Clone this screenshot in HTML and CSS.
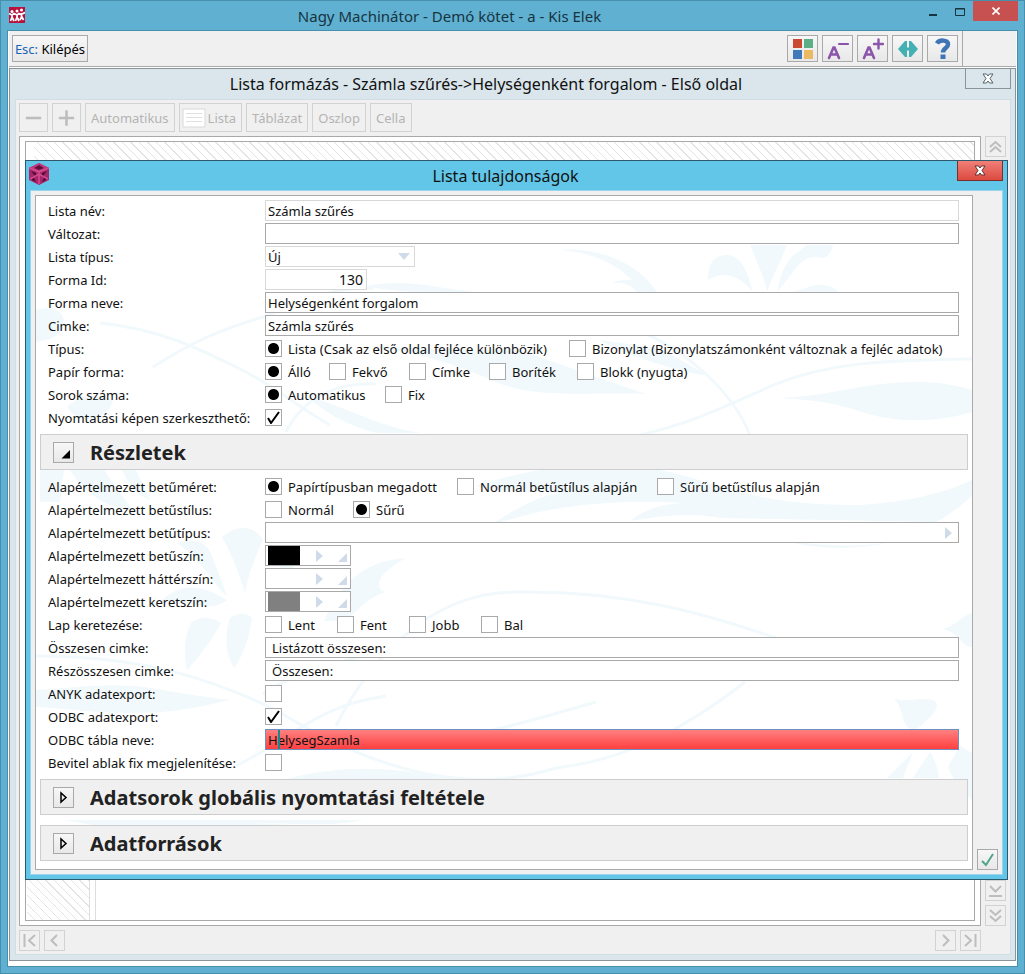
FILE: index.html
```
<!DOCTYPE html>
<html lang="hu">
<head>
  <meta charset="UTF-8" />
  <title>Nagy Machinátor</title>
  <link rel="stylesheet" href="styles.css">
</head>
<body>
  <div class="app-window">
    <header class="app-title">
      <svg class="app-logo" viewBox="0 0 16 16" width="16" height="16">
        <rect width="16" height="16" fill="#b8123c" />
        <path d="M0 6.500l3 1.500 2-1.500 3 1.500 2-1.500 2 1 4-2M3 7v3l-1.500 4M3 10l2 4M8 7v3l-1.500 4M8 10l2 4M12.500 6v4l-1.500 3M12.500 9l2 4" fill="none" stroke="#fff" stroke-width="1.700" />
        <circle cx="3" cy="4.500" r="1.500" fill="#fff" /><circle cx="8" cy="4" r="1.500" fill="#fff" /><circle cx="12.500" cy="3" r="1.500" fill="#fff" />
      </svg>
      <h1>Nagy Machinátor - Demó kötet - a - Kis Elek</h1>
      <div class="window-buttons">
        <button type="button" aria-label="Kis méret"><svg width="10" height="16" viewBox="0 0 10 16"><path d="M1 12h8" stroke="#17343f" stroke-width="2" /></svg></button>
        <button type="button" aria-label="Teljes méret"><svg width="10" height="16" viewBox="0 0 10 16"><path d="M.5 5.500v7h9v-7zM0 6h10" fill="none" stroke="#17343f" /></svg></button>
        <button type="button" class="close" aria-label="Bezárás"><svg width="8" height="8" viewBox="0 0 8 8"><path d="M.5.500l7 7M7.500.500l-7 7" stroke="#fff" stroke-width="1.600" /></svg></button>
      </div>
    </header>

    <div class="app-client">
      <div class="toolbar">
        <button type="button" class="esc-btn"><span>Esc:</span> Kilépés</button>
        <div class="tools">
          <button type="button" aria-label="Színek"><svg width="22" height="22" viewBox="0 0 22 22"><path fill="#cb4b32" d="M1 1h9v9H1z" /><path fill="#5aae88" d="M12 1h9v9h-9z" /><path fill="#3f79b8" d="M1 12h9v9H1z" /><path fill="#eab962" d="M12 12h9v9h-9z" /></svg></button>
          <button type="button" aria-label="Kisebb betű"><svg width="22" height="22" viewBox="0 0 22 22" fill="none" stroke="#8b55ab" stroke-width="2.600" stroke-linecap="round"><path d="M2 20L6.500 9.500h1L12 20M4.500 16.500h5.500" /><path d="M12 6h9" stroke-width="2.200" /></svg></button>
          <button type="button" aria-label="Nagyobb betű"><svg width="22" height="22" viewBox="0 0 22 22" fill="none" stroke="#8b55ab" stroke-width="2.600" stroke-linecap="round"><path d="M2 20L6.500 9.500h1L12 20M4.500 16.500h5.500" /><path d="M12 6h9M16.500 1.500v9" stroke-width="2.400" /></svg></button>
          <button type="button" aria-label="Szélesség"><svg width="22" height="22" viewBox="0 0 22 22"><path fill="#45b0b3" d="M1 11l7-8h2v6.500h2V3h2l7 8-7 8h-2v-6.500h-2V19H8z" /></svg></button>
          <button type="button" aria-label="Súgó"><svg width="22" height="22" viewBox="0 0 22 22" fill="none" stroke="#3f74b5" stroke-width="4.500"><path d="M5 5.500c2-4 11.500-4 11 1 0 3.500-5 3.500-5 8" /><path d="M11 16.500v4.500" stroke-width="5" /></svg></button>
        </div>
      </div>

      <div class="mdi-window">
        <header class="mdi-title">
          <h2>Lista formázás - Számla szűrés-&gt;Helységenként forgalom - Első oldal</h2>
          <button type="button" aria-label="Bezárás"><svg width="12" height="11" viewBox="0 0 12 11"><path d="M1 1h3.500L6 3l1.500-2H11L8 5.500l3 4.500H7.500L6 8l-1.500 2H1l3-4.500z" fill="#fff" stroke="#53636a" /></svg></button>
        </header>
        <div class="mdi-body">
          <div class="format-bar">
            <button type="button" class="square" disabled aria-label="Kevesebb"><svg width="20" height="20" viewBox="0 0 20 20"><path d="M1 10h18" stroke="#bdbdbd" stroke-width="3" /></svg></button>
            <button type="button" class="square" disabled aria-label="Több"><svg width="20" height="20" viewBox="0 0 20 20"><path d="M1 10h18M10 1v18" stroke="#bdbdbd" stroke-width="3" /></svg></button>
            <button type="button" disabled>Automatikus</button>
            <button type="button" class="with-icon" disabled><svg width="24" height="20" viewBox="0 0 24 20"><path d="M1 1h22v18H1z" fill="#fff" stroke="#d9d9d9" /><path d="M4 5.500h16M4 9.500h16M4 13.500h16" stroke="#e0e0e0" /></svg>Lista</button>
            <button type="button" disabled>Táblázat</button>
            <button type="button" disabled>Oszlop</button>
            <button type="button" disabled>Cella</button>
          </div>
          <div class="preview">
            <div class="preview-frame">
              <div class="page">
                <div class="page-top hatch"></div>
                <div class="page-left"><div class="hatch"></div></div>
              </div>
            </div>
            <div class="v-scroll">
              <button type="button" disabled aria-label="Első"><svg width="15" height="15" viewBox="0 0 15 15"><path d="M2 8l5.500-5L13 8M2 13l5.500-5 5.500 5" /></svg></button>
              <div class="v-scroll-end">
                <button type="button" disabled aria-label="Lap alja"><svg width="15" height="15" viewBox="0 0 15 15"><path d="M2 3l5.500 5.500L13 3M1 13h13" /></svg></button>
                <button type="button" disabled aria-label="Utolsó"><svg width="15" height="15" viewBox="0 0 15 15"><path d="M2 2l5.500 5L13 2M2 8l5.500 5L13 8" /></svg></button>
              </div>
            </div>
          </div>
          <div class="h-scroll">
            <button type="button" disabled aria-label="Bal széle"><svg width="15" height="15" viewBox="0 0 15 15"><path d="M2.500 1v13M13 2L7 7.500l6 5.500" /></svg></button>
            <button type="button" disabled aria-label="Balra"><svg width="15" height="15" viewBox="0 0 15 15"><path d="M10 2L4.500 7.500 10 13" /></svg></button>
            <span class="spacer"></span>
            <button type="button" disabled aria-label="Jobbra"><svg width="15" height="15" viewBox="0 0 15 15"><path d="M5 2l5.500 5.500L5 13" /></svg></button>
            <button type="button" disabled aria-label="Jobb széle"><svg width="15" height="15" viewBox="0 0 15 15"><path d="M2 2l6 5.500L2 13M12.500 1v13" /></svg></button>
          </div>
        </div>

        <section class="dialog" role="dialog" aria-labelledby="dialog-title">
          <header class="dialog-title">
            <svg width="22" height="22" viewBox="0 0 22 22">
              <path d="M11 0l10 5v12l-10 5L1 17V5z" fill="#a8256a" />
              <path d="M11 0l10 5-10 4L1 5z" fill="#c33a80" />
              <path d="M11 2l5 3-5 2-5-2z" fill="#5c0f38" />
              <path d="M3 8l5 6V10zM4 17l4 2-3-6zM19 8l-5 6V10zM18 17l-4 2 3-6z" fill="#4d0b2e" />
              <path d="M1 5l10 4v12M21 5L11 9M2 16l9-5 9 5" fill="none" stroke="#d14b90" stroke-width="1.500" />
            </svg>
            <h2 id="dialog-title">Lista tulajdonságok</h2>
            <button type="button" aria-label="Bezárás"><svg width="12" height="11" viewBox="0 0 12 11"><path d="M1 1h3.500L6 3l1.500-2H11L8 5.500l3 4.500H7.500L6 8l-1.500 2H1l3-4.500z" fill="#fff" stroke="#5d3230" /></svg></button>
          </header>
          <div class="dialog-body">
            <form class="panel">
              <svg class="ornament" viewBox="0 0 936 673" preserveAspectRatio="none" aria-hidden="true">
                <g fill="#f1f9fc">
                  <path d="M714 49h37c-6 16-14 30-20 47-3-15-10-30-17-47z" />
                  <path d="M672 84c0-15 5-25 19-25 14 1 20 15 26 37-12-15-28-23-45-12z" />
                  <path d="M797 49c-2 9-6 13-12 13-14-4-22 6-28 14l-16 20c4-18 6-25 16-36 5-4 9-6 13-11z" />
                  <path d="M754 96c12-1 20-8 32-7 8 1 14 3 16 7z" />
                  <path d="M524 54c40-4 80 15 97 42h-20c-6-7-14-10-25-9 8-4 15-3 20-3-14-15-40-28-72-30z" />
                  <path d="M744 202c60-3 80-16 140-16 20 0 40 4 52 8v22c-40 12-80 10-110 0-30-10-50-12-82-14z" />
                  <path d="M330 90c40-8 70 2 110 6h-50c-20 0-40-2-60-6z" />
                  <path d="M330 150c60 2 90 5 150 3l130 45c-60-2-110 5-150-12-40-18-80-30-130-36z" />
                  <path d="M563 144l60 8 50 28c-30-4-80-20-110-36z" />
                  <path d="M270 200c40 10 90 40 130 37h-60c-30-8-50-20-70-37z" />
                  <path d="M440 290c60-20 130-27 184-16 60 12 90 36 200 35 50-3 90-14 112-25v16c-14 12-24 20-36 26l-216-4c-30-6-60-2-90 3 20-16 40-17 55-18-80-5-150 5-200 25 25-15 50-32 76-35-30-2-60 0-85-7z" />
                  <path d="M750 345c50 6 80 6 110 0-30 8-75 10-110 0z" />
                  <path d="M186 341c6-5 14-9 21-9 9 0 15 4 20 12-7 15-15 35-18 53-6-20-12-36-23-56z" />
                  <path d="M141 347c20-6 30 0 35 13l15 40c-15-13-24-35-50-53z" />
                  <path d="M227 396c12-22 25-37 40-42-10 20-20 34-40 42z" />
                  <path d="M124 406c20-20 40-18 67-2-18 14-32 0-67 2zM155 427c10-9 22-5 30 0-6 11-18 30-34 47-4-20-2-35 4-47zM194 422c10-7 18-4 22 0-3 20-8 36-18 50-10-18-9-35-4-50z" />
                  <path d="M4 274h24l-4 32H4zM34 274h34l30 42c-25-5-47-15-64-42zM86 274h14l14 30c-16-6-22-18-28-30z" />
                  <path d="M0 494c50-4 90-8 127 0 25 5 45 7 67 10-35 8-65 14-100 13-35 0-60-4-94-6z" />
                  <path d="M0 114c20-6 30 4 28 16-5 12-16 14-28 16zM31 211c10-10 30-16 46-6-6 20-34 26-46 6z" />
                  <path d="M288 425c20-45 45-60 82-63-34 18-30 32-20 34-20 6-30 20-40 29z" />
                  <path d="M852 497c14 14 25 3 45 7 8 4 2 13-4 18-9 8-12 14-20 10-10-8-4-24-21-35z" />
                  <path d="M877 556l-26 26h16zM894 556l-17 26h26c-1-10-5-20-9-26zM924 550l12 7v47c-8-10-20-20-24-33z" />
                  <path d="M905 433c15-2 18-12 31-16v34c-12 0-12-16-31-18z" />
                  <path d="M250 583c60-15 110-12 160 0zM28 624h300c-40 8-80 2-110 4 60 0 70 6 100 3-60 7-200 9-250 0z" />
                </g>
                <g fill="none" stroke="#f1f9fc" stroke-width="3">
                  <path d="M64 127c60 6 100 26 140 46 40 20 60 40 90 56M117 171c40-26 70-38 110-50 50-20 70-30 110-29" />
                  <path d="M600 240c60-14 90-30 140-52 50-20 100-24 196-25M590 130c60 20 110 70 124 110M250 236c20-40 60-50 90-48" />
                  <path d="M300 530c30-60 90-134 180-134 110-2 190 22 260 46M0 460c110 0 180 25 240 54 80 50 180 90 280 58 70-8 130-40 189-86M227 498c30-20 60-30 130-44M200 570c60-30 80-60 150-70M430 540c50-10 80-20 130-34" />
                </g>
              </svg>

              <div class="row">
                <label for="lista-nev">Lista név:</label>
                <input type="text" id="lista-nev" class="field locked" value="Számla szűrés" readonly />
              </div>
              <div class="row">
                <label for="valtozat">Változat:</label>
                <input type="text" id="valtozat" class="field" />
              </div>
              <div class="row">
                <label for="lista-tipus">Lista típus:</label>
                <select id="lista-tipus" class="field locked type-select" disabled><option>Új</option></select>
              </div>
              <div class="row">
                <label for="forma-id">Forma Id:</label>
                <input type="text" id="forma-id" class="field locked id-field" value="130" readonly />
              </div>
              <div class="row">
                <label for="forma-neve">Forma neve:</label>
                <input type="text" id="forma-neve" class="field" value="Helységenként forgalom" />
              </div>
              <div class="row">
                <label for="cimke">Cimke:</label>
                <input type="text" id="cimke" class="field" value="Számla szűrés" />
              </div>
              <div class="row" role="radiogroup" aria-labelledby="l-tipus">
                <span id="l-tipus">Típus:</span>
                <div class="options w304">
                  <label><input type="radio" name="tipus" checked />Lista (Csak az első oldal fejléce különbözik)</label>
                  <label><input type="radio" name="tipus" />Bizonylat (Bizonylatszámonként változnak a fejléc adatok)</label>
                </div>
              </div>
              <div class="row" role="radiogroup" aria-labelledby="l-papir">
                <span id="l-papir">Papír forma:</span>
                <div class="options paper">
                  <label><input type="radio" name="papir" checked />Álló</label>
                  <label><input type="radio" name="papir" />Fekvő</label>
                  <label><input type="radio" name="papir" />Címke</label>
                  <label><input type="radio" name="papir" />Boríték</label>
                  <label><input type="radio" name="papir" />Blokk (nyugta)</label>
                </div>
              </div>
              <div class="row" role="radiogroup" aria-labelledby="l-sorok">
                <span id="l-sorok">Sorok száma:</span>
                <div class="options w120">
                  <label><input type="radio" name="sorok" checked />Automatikus</label>
                  <label><input type="radio" name="sorok" />Fix</label>
                </div>
              </div>
              <div class="row">
                <label for="nyomtatasi">Nyomtatási képen szerkeszthető:</label>
                <input type="checkbox" id="nyomtatasi" checked />
              </div>

              <div class="section">
                <button type="button" aria-label="Részletek bezárása"><svg width="19" height="19" viewBox="0 0 19 19"><path d="M16 7v8.500H7.500z" fill="#000" /></svg></button>
                <h3>Részletek</h3>
              </div>

              <div class="details">
                <div class="row" role="radiogroup" aria-labelledby="l-meret">
                  <span id="l-meret">Alapértelmezett betűméret:</span>
                  <div class="options sizes">
                    <label><input type="radio" name="meret" checked />Papírtípusban megadott</label>
                    <label><input type="radio" name="meret" />Normál betűstílus alapján</label>
                    <label><input type="radio" name="meret" />Sűrű betűstílus alapján</label>
                  </div>
                </div>
                <div class="row" role="radiogroup" aria-labelledby="l-stilus">
                  <span id="l-stilus">Alapértelmezett betűstílus:</span>
                  <div class="options w88">
                    <label><input type="radio" name="stilus" />Normál</label>
                    <label><input type="radio" name="stilus" checked />Sűrű</label>
                  </div>
                </div>
                <div class="row">
                  <label for="betutipus">Alapértelmezett betűtípus:</label>
                  <input type="text" id="betutipus" class="field pick" />
                </div>
                <div class="row">
                  <span>Alapértelmezett betűszín:</span>
                  <div class="color-field">
                    <span class="swatch black"></span>
                    <button type="button" aria-label="Betűszín választása"><svg width="8" height="12" viewBox="0 0 8 12"><path d="M1 0l7 6-7 6z" /></svg></button>
                    <button type="button" aria-label="Betűszín lenyitása"><svg width="9" height="9" viewBox="0 0 9 9"><path d="M9 0v9H0z" /></svg></button>
                  </div>
                </div>
                <div class="row">
                  <span>Alapértelmezett háttérszín:</span>
                  <div class="color-field">
                    <span class="swatch"></span>
                    <button type="button" aria-label="Háttérszín választása"><svg width="8" height="12" viewBox="0 0 8 12"><path d="M1 0l7 6-7 6z" /></svg></button>
                    <button type="button" aria-label="Háttérszín lenyitása"><svg width="9" height="9" viewBox="0 0 9 9"><path d="M9 0v9H0z" /></svg></button>
                  </div>
                </div>
                <div class="row">
                  <span>Alapértelmezett keretszín:</span>
                  <div class="color-field">
                    <span class="swatch gray"></span>
                    <button type="button" aria-label="Keretszín választása"><svg width="8" height="12" viewBox="0 0 8 12"><path d="M1 0l7 6-7 6z" /></svg></button>
                    <button type="button" aria-label="Keretszín lenyitása"><svg width="9" height="9" viewBox="0 0 9 9"><path d="M9 0v9H0z" /></svg></button>
                  </div>
                </div>
                <div class="row" role="group" aria-labelledby="l-keret">
                  <span id="l-keret">Lap keretezése:</span>
                  <div class="options w72">
                    <label><input type="checkbox" />Lent</label>
                    <label><input type="checkbox" />Fent</label>
                    <label><input type="checkbox" />Jobb</label>
                    <label><input type="checkbox" />Bal</label>
                  </div>
                </div>
                <div class="row">
                  <label for="osszesen">Összesen cimke:</label>
                  <input type="text" id="osszesen" class="field indent" value="Listázott összesen:" />
                </div>
                <div class="row">
                  <label for="reszosszesen">Részösszesen cimke:</label>
                  <input type="text" id="reszosszesen" class="field indent" value="Összesen:" />
                </div>
                <div class="row">
                  <label for="anyk">ANYK adatexport:</label>
                  <input type="checkbox" id="anyk" />
                </div>
                <div class="row">
                  <label for="odbc">ODBC adatexport:</label>
                  <input type="checkbox" id="odbc" checked />
                </div>
                <div class="row">
                  <label for="odbc-tabla">ODBC tábla neve:</label>
                  <div class="error-field">
                    <input type="text" id="odbc-tabla" class="field" value="HelysegSzamla" />
                    <span class="caret"></span>
                  </div>
                </div>
                <div class="row">
                  <label for="bevitel">Bevitel ablak fix megjelenítése:</label>
                  <input type="checkbox" id="bevitel" />
                </div>
              </div>

              <div class="section">
                <button type="button" aria-label="Adatsorok megnyitása"><svg width="19" height="19" viewBox="0 0 19 19"><path d="M7 5v9l5-4.500z" fill="none" stroke="#000" stroke-width="1.500" /></svg></button>
                <h3>Adatsorok globális nyomtatási feltétele</h3>
              </div>
              <div class="section last">
                <button type="button" aria-label="Adatforrások megnyitása"><svg width="19" height="19" viewBox="0 0 19 19"><path d="M7 5v9l5-4.500z" fill="none" stroke="#000" stroke-width="1.500" /></svg></button>
                <h3>Adatforrások</h3>
              </div>
            </form>
            <button type="button" class="ok-btn" aria-label="Rendben"><svg width="15" height="15" viewBox="0 0 15 15"><path d="M2 9l4 4 7-11" fill="none" stroke="#4fa585" stroke-width="2" /></svg></button>
          </div>
        </section>
      </div>
    </div>
  </div>
</body>
</html>
```
FILE: styles.css
```
* {
  box-sizing: border-box;
}
body {
  margin: 0;
  font-family: "Noto Sans", "Open Sans", sans-serif;
  font-size: 13px;
  color: #111;
}
h1, h2, h3 {
  margin: 0;
  font-weight: normal;
}
button, input, select {
  font: inherit;
  color: inherit;
  margin: 0;
  padding: 0;
  border-radius: 0;
}
button {
  display: flex;
  align-items: center;
  justify-content: center;
  border: 1px solid #a9a9a9;
  background: linear-gradient(#f7f7f7, #e8e8e8);
}
svg {
  display: block;
}

/* main window */
.app-window {
  min-height: 100vh;
  display: flex;
  flex-direction: column;
  background: #60b0d2;
  border: 1px solid #4690ae;
  padding: 0 6px 6px;
}
.app-title {
  display: grid;
  grid-template-columns: 16px 1fr 100px;
  height: 29px;
  padding-left: 2px;
}
.app-logo {
  margin-top: 6px;
}
.app-title h1 {
  font-size: 15px;
  line-height: 30px;
  text-align: center;
  color: #17343f;
  padding-right: 44px;
}
.window-buttons {
  display: flex;
  justify-content: flex-end;
  align-items: flex-start;
}
.window-buttons button {
  width: 27px;
  height: 20px;
  border: none;
  background: none;
}
.window-buttons .close {
  width: 45px;
  background: #c75050;
}
.app-client {
  flex: 1;
  display: flex;
  flex-direction: column;
  border: 1px solid #4690ae;
  background: #fff;
  padding: 0 1px 5px;
}

/* top toolbar */
.toolbar {
  display: flex;
  justify-content: space-between;
  height: 36px;
  background: #f0f0f0;
  border-bottom: 1px solid #a9a9a9;
  padding-right: 53px;
}
.esc-btn {
  height: 27px;
  width: 76px;
  margin: 4px 0 0 3px;
  color: #000;
  white-space: pre;
}
.esc-btn span {
  color: #1a64b8;
}
.tools {
  display: flex;
  gap: 4px;
  padding: 4px 4px 0 0;
  border-right: 1px solid #a9a9a9;
}
.tools button {
  width: 31px;
  height: 27px;
}

/* list formatting window */
.mdi-window {
  position: relative;
  flex: 1;
  display: flex;
  flex-direction: column;
  margin-top: 1px;
  border: 1px solid #8a9499;
  background: #dae6ec;
  padding: 0 4px 5px 5px;
}
.mdi-title {
  display: flex;
  height: 30px;
}
.mdi-title h2 {
  flex: 1;
  font-size: 16px;
  line-height: 30px;
  text-align: center;
  padding-right: 54px;
}
.mdi-title button {
  width: 46px;
  height: 20px;
  margin-left: -46px;
  border: 1px solid #8a9499;
  border-top: none;
  background: #dae6ec;
}
.mdi-body {
  flex: 1;
  display: flex;
  flex-direction: column;
  border: 1px solid #cfdde4;
  background: #f0f0f0;
  padding: 3px 4px 3px 3px;
}
.mdi-body button {
  border-color: #d2d2d2;
  background: #f0f0f0;
  color: #b4b4b4;
}
.format-bar {
  display: flex;
  gap: 4px;
  margin-bottom: 4px;
}
.format-bar button {
  height: 29px;
  padding: 0 5px;
}
.format-bar .square {
  width: 29px;
}
.format-bar .with-icon {
  padding-left: 2px;
  gap: 2px;
}
.preview {
  flex: 1;
  display: flex;
  gap: 4px;
}
.preview-frame {
  flex: 1;
  display: flex;
  border: 1px solid #a9a9a9;
  background: #fff;
  padding: 4px 5px;
}
.page {
  flex: 1;
  display: flex;
  flex-direction: column;
  border: 1px solid #a9a9a9;
}
.hatch {
  background: repeating-linear-gradient(45deg, #fff 0 5px, #e4e4e4 5px 6px);
}
.page-top {
  height: 30px;
  margin-left: 8px;
}
.page-left {
  flex: 1;
  display: flex;
  width: 70px;
  border-right: 1px solid #ddd;
  padding: 0 5px 0 1px;
}
.page-left .hatch {
  flex: 1;
  border-right: 1px solid #ddd;
}
.v-scroll {
  display: flex;
  flex-direction: column;
  justify-content: space-between;
}
.v-scroll-end {
  display: grid;
  gap: 4px;
}
.v-scroll button, .h-scroll button {
  width: 21px;
  height: 21px;
}
.v-scroll path, .h-scroll path {
  fill: none;
  stroke: #bdbdbd;
  stroke-width: 2;
}
.h-scroll {
  display: flex;
  gap: 4px;
  padding-top: 4px;
  margin-right: 25px;
}
.spacer {
  flex: 1;
}

/* properties dialog */
.dialog {
  position: absolute;
  top: 91px;
  left: 15px;
  right: 7px;
  border: 1px solid #2c5a6c;
  background: #62c6e8;
  padding: 0 4px 4px;
}
.dialog-title {
  display: flex;
  height: 29px;
}
.dialog-title h2 {
  flex: 1;
  font-size: 16px;
  line-height: 30px;
  text-align: center;
  padding-right: 42px;
}
.dialog-title > svg {
  flex: none;
  width: 22px;
  margin: 2px 0 0 -2px;
}
.dialog-title button {
  width: 46px;
  height: 20px;
  margin-left: -46px;
  border: 1px solid #7b2d2a;
  border-top: none;
  background: linear-gradient(#f08078, #dc4a40);
}
.dialog-body {
  display: flex;
  align-items: flex-end;
  gap: 4px;
  border: 1px solid #9bd3ea;
  background: #f0f0f0;
  padding: 4px;
}
.panel {
  position: relative;
  flex: 1;
  border: 1px solid #a9a9a9;
  background: #fff;
  padding: 4px 4px 8px;
}
.ornament {
  position: absolute;
  inset: 0;
  width: 100%;
  height: 100%;
}
.row {
  position: relative;
  display: grid;
  grid-template-columns: 217px 1fr;
  align-items: center;
  height: 23px;
  margin: 0 9px 0 8px;
  padding-bottom: 2px;
  white-space: nowrap;
}
.field {
  width: 100%;
  height: 21px;
  padding: 0 2px;
  border: 1px solid #a9a9a9;
  background-color: #fffffff0;
  outline: none;
}
.locked {
  border-color: #d8d8d8;
}
.field:disabled {
  color: inherit;
  opacity: 1;
}
.type-select {
  width: 150px;
  appearance: none;
  background-image: url("data:image/svg+xml,%3Csvg xmlns='http://www.w3.org/2000/svg' width='12' height='7'%3E%3Cpath d='M0 0h12L6 7z' fill='%23cfdbe8'/%3E%3C/svg%3E");
  background-repeat: no-repeat;
  background-position: right 4px center;
}
.id-field {
  width: 102px;
  font-size: 14px;
  text-align: right;
  padding-right: 3px;
}
.pick {
  background-image: url("data:image/svg+xml,%3Csvg xmlns='http://www.w3.org/2000/svg' width='7' height='12'%3E%3Cpath d='M0 0l7 6-7 6z' fill='%23cfdbe8'/%3E%3C/svg%3E");
  background-repeat: no-repeat;
  background-position: right 6px center;
}
.indent {
  padding-left: 6px;
}
.options {
  display: grid;
  grid-auto-flow: column;
  justify-content: start;
}
.options label {
  display: flex;
  align-items: center;
  gap: 6px;
}
.w304 { grid-template-columns: 304px auto; }
.w120 { grid-template-columns: 120px auto; }
.w88 { grid-template-columns: 88px auto; }
.w72 { grid-template-columns: 72px 72px 72px auto; }
.paper { grid-template-columns: 64px 80px 80px 88px auto; }
.sizes { grid-template-columns: 192px 200px auto; }

input[type="radio"], input[type="checkbox"] {
  appearance: none;
  flex: none;
  width: 17px;
  height: 17px;
  border: 1px solid #a9a9a9;
  background: #fff center no-repeat;
}
input[type="radio"]:checked {
  background-image: radial-gradient(circle, #000 5px, #fff 6px);
}
input[type="checkbox"]:checked {
  background-image: url("data:image/svg+xml,%3Csvg xmlns='http://www.w3.org/2000/svg' width='13' height='13'%3E%3Cpath d='M1 7l3 5 8-11' fill='none' stroke='%23000' stroke-width='2'/%3E%3C/svg%3E");
}
.color-field {
  display: flex;
  align-items: center;
  width: 86px;
  height: 21px;
  padding: 0 3px 0 2px;
  border: 1px solid #a9a9a9;
  background: #fff;
}
.swatch {
  width: 32px;
  height: 19px;
  margin-right: 15px;
}
.swatch.black {
  background: #000;
}
.swatch.gray {
  background: #808080;
}
.color-field button {
  height: 19px;
  border: none;
  background: none;
}
.color-field button:last-child {
  margin-left: auto;
  align-items: flex-end;
  padding-bottom: 3px;
}
.color-field path {
  fill: #cfdbe8;
}
.error-field {
  position: relative;
  display: flex;
}
.error-field .field {
  border-color: #6f8fc0;
  background: linear-gradient(#ff8080, #ff4040);
}
.caret {
  position: absolute;
  left: 13px;
  top: 1px;
  width: 2px;
  height: 19px;
  background: #168a8c;
}
.section {
  position: relative;
  display: flex;
  align-items: center;
  gap: 16px;
  height: 36px;
  margin-top: 4px;
  padding-left: 12px;
  border: 1px solid #cdcdcd;
  background: #f0f0f0;
}
.section button {
  width: 21px;
  height: 21px;
}
.section h3 {
  font-size: 20px;
  font-weight: bold;
  line-height: 32px;
  padding-top: 2px;
  color: #222;
}
.section.last {
  margin-top: 10px;
}
.details {
  padding-top: 6px;
}
.ok-btn {
  flex: none;
  width: 21px;
  height: 21px;
}
```
